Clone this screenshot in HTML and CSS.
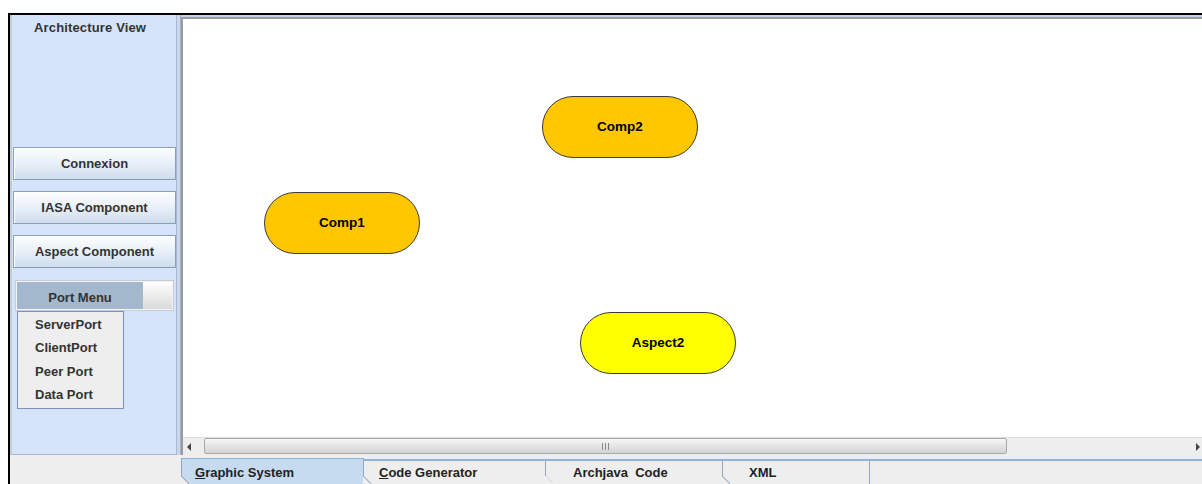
FILE: index.html
```html
<!DOCTYPE html>
<html lang="en">

<head>
  <meta charset="UTF-8">
  <meta name="viewport" content="width=device-width, initial-scale=1.0">
  <title>Architecture View</title>
  <link rel="stylesheet" href="styles.css">
</head>

<body>
  <div class="frame">
    <div class="workspace">

      <div class="sidebar">
        <div class="sidebar-title">Architecture View</div>

        <div class="tools">
          <button class="tool">Connexion</button>
          <button class="tool">IASA Component</button>
          <button class="tool tool-last">Aspect Component</button>

          <div class="menubar">
            <div class="menu-open">Port Menu</div>
            <div class="menu-rest"></div>
          </div>
          <ul class="popup">
            <li class="popup-item">ServerPort</li>
            <li class="popup-item">ClientPort</li>
            <li class="popup-item">Peer Port</li>
            <li class="popup-item">Data Port</li>
          </ul>
        </div>
      </div>

      <div class="splitter"></div>

      <div class="view">
        <div class="scroll-pane">
          <div class="canvas">
            <div class="node comp" style="left: 81px; top: 173px;">Comp1</div>
            <div class="node comp" style="left: 359px; top: 77px;">Comp2</div>
            <div class="node aspect" style="left: 397px; top: 293px;">Aspect2</div>
          </div>
          <div class="hbar">
            <div class="arrow arrow-left"></div>
            <div class="track">
              <div class="thumb"><span class="grip"></span></div>
            </div>
            <div class="arrow arrow-right"></div>
          </div>
        </div>
      </div>

    </div>

    <div class="tabbar">
      <div class="tabs">
        <div class="tab tab-selected tab-graphic"><u>G</u>raphic System</div>
        <div class="tab tab-code"><u>C</u>ode Generator</div>
        <div class="tab tab-archjava">Archjava&nbsp; Code</div>
        <div class="tab tab-xml">XML</div>
      </div>
    </div>
  </div>
</body>

</html>
```

FILE: styles.css
```css
* {
  box-sizing: border-box;
}

body {
  margin: 0;
  background: #fff;
  font-family: "Liberation Sans", Arial, sans-serif;
  font-size: 13px;
  font-weight: bold;
  color: #333;
  overflow: hidden;
}

.frame {
  margin: 13px 0 0 8px;
  height: 471px;
  border-top: 2px solid #000;
  border-left: 2px solid #000;
  background: #eeeeee;
}

.workspace {
  display: flex;
  height: 440px;
}

/* left tool panel */
.sidebar {
  width: 167px;
  background: #d6e4fb;
  border-left: 2px solid #c3cedd;
  border-right: 1px solid #a9b9cf;
  border-bottom: 1px solid #a9b9cf;
}

.sidebar-title {
  height: 132px;
  padding: 5px 0 0 22px;
  line-height: 16px;
  letter-spacing: 0.15px;
}

.tools {
  display: flex;
  flex-direction: column;
}

.tool {
  width: 163px;
  height: 33px;
  margin: 0 0 11px 1px;
  padding: 0;
  font: inherit;
  color: #333;
  border: 1px solid #8d9fb7;
  background: linear-gradient(#fdfeff, #e6eef7 55%, #cddcec);
  box-shadow: inset 1px 1px 0 #fff;
}

.tool-last {
  margin-bottom: 12px;
}

.menubar {
  display: flex;
  width: 159px;
  height: 31px;
  margin-left: 3px;
  padding: 1px;
  border: 1px solid #c4ccd6;
  background: #f4f4f4;
}

.menu-open {
  width: 126px;
  padding-top: 1px;
  background: #a3b8cc;
  text-align: center;
  line-height: 29px;
}

.menu-rest {
  flex: 1;
  background: linear-gradient(#ffffff, #dadada);
}

.popup {
  width: 107px;
  margin: 0 0 0 5px;
  padding: 1px 0 1px;
  list-style: none;
  background: #eeeeee;
  border: 1px solid #7f90c0;
}

.popup-item {
  height: 23.4px;
  line-height: 23.4px;
  padding-left: 17px;
}

.splitter {
  width: 4px;
  background: #c9d8ee;
  border-right: 1px solid #9fb0c8;
}

/* drawing area */
.view {
  flex: 1;
  display: flex;
  flex-direction: column;
  border-top: 2px solid #c3d5ee;
}

.scroll-pane {
  flex: 1;
  display: flex;
  flex-direction: column;
  border-top: 2px solid #9c9c9c;
  border-left: 2px solid #9c9c9c;
}

.canvas {
  position: relative;
  flex: 1;
  background: #fff;
}

.node {
  position: absolute;
  width: 156px;
  height: 62px;
  border: 1px solid #3a3a3a;
  border-radius: 31px;
  color: #000;
  font-size: 13.5px;
  text-align: center;
  line-height: 60px;
}

.comp {
  background: #ffc700;
}

.aspect {
  background: #ffff00;
}

.hbar {
  display: flex;
  height: 18px;
  background: #eeeeee;
  border-top: 1px solid #dedede;
}

.arrow {
  display: flex;
  align-items: center;
}

.arrow-left {
  width: 21px;
  padding-left: 4px;
}

.arrow-left::before {
  content: "";
  border-right: 4px solid #444;
  border-top: 4px solid transparent;
  border-bottom: 4px solid transparent;
}

.arrow-right {
  width: 12px;
  padding-left: 6px;
}

.arrow-right::before {
  content: "";
  border-left: 4px solid #444;
  border-top: 4px solid transparent;
  border-bottom: 4px solid transparent;
}

.track {
  flex: 1;
}

.thumb {
  display: flex;
  align-items: center;
  justify-content: center;
  width: 803px;
  height: 16px;
  border: 1px solid #a9a9a9;
  border-radius: 2px;
  background: linear-gradient(#f6f6f6, #d3d3d3);
}

.grip {
  width: 7px;
  height: 7px;
  background: repeating-linear-gradient(90deg, #8a8a8a 0 1px, transparent 1px 3px);
}

/* bottom tabs */
.tabbar {
  height: 29px;
  padding: 4px 0 0 171px;
}

.tabs {
  display: flex;
  align-items: flex-end;
  height: 25px;
  border-top: 2px solid #8fb1e3;
}

.tab {
  position: relative;
  height: 23px;
  line-height: 23px;
  border-right: 1px solid #98a7bb;
  background: #eeeeee;
  color: #222;
}

.tab::after {
  content: "";
  position: absolute;
  left: -1px;
  bottom: 0;
  width: 8px;
  height: 8px;
  background: linear-gradient(to top right, #eeeeee 50%, #98a7bb 50%, transparent calc(50% + 1px));
}

.tab-selected {
  height: 26px;
  margin-top: -3px;
  padding-top: 2px;
  background: #c6daf0;
  border-left: 1px solid #8fa4c2;
  border-top: 1px solid #8fb1e3;
}

.tab-graphic {
  width: 183px;
  padding-left: 13px;
}

.tab-code {
  width: 182px;
  padding-left: 15px;
}

.tab-archjava {
  width: 177px;
  padding-left: 27px;
}

.tab-xml {
  width: 147px;
  padding-left: 26px;
}
```
